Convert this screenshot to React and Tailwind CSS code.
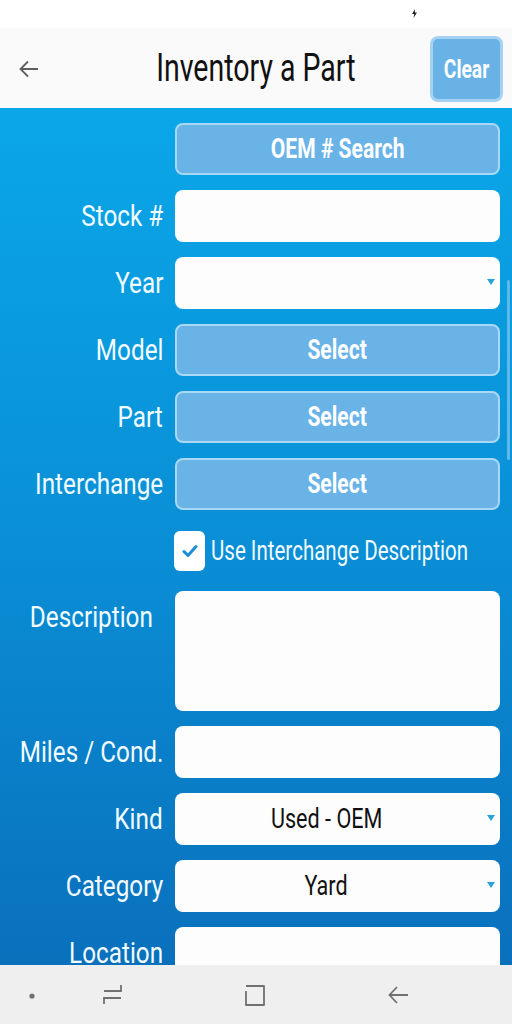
import React from "react";

const font = { fontFamily: "Roboto, 'Noto Sans', sans-serif" };

function Label({ children }) {
  return (
    <div className="w-[175px] shrink-0 pr-[12px] flex justify-end items-center">
      <span className="inline-block origin-right scale-x-[0.81] text-[30px] leading-none text-[#f2fbff] whitespace-nowrap">
        {children}
      </span>
    </div>
  );
}

function SelectBtn({ text }) {
  return (
    <div className="w-[325px] shrink-0 h-[52px] rounded-[8px] border-2 border-[#a9d8f6] bg-[#69b3e7] flex items-center justify-center">
      <span className="inline-block scale-x-[0.78] text-[27px] font-bold leading-none text-white whitespace-nowrap">{text}</span>
    </div>
  );
}

function Input({ h = "h-[52px]" }) {
  return <div className={`w-[325px] shrink-0 ${h} rounded-[8px] bg-[#fdfdfd]`} />;
}

function Dropdown({ value }) {
  return (
    <div className="w-[325px] shrink-0 h-[52px] rounded-[8px] bg-[#fdfdfd] flex items-center relative">
      <div className="flex-1 flex justify-center pr-[22px]">
        <span className="inline-block scale-x-[0.8] text-[27px] leading-none text-[#111] whitespace-nowrap">{value}</span>
      </div>
      <svg className="absolute right-[5px] top-[22px]" width="8" height="6" viewBox="0 0 8 6">
        <path d="M0 0 H8 L4 6 Z" fill="#2aa3d9" />
      </svg>
    </div>
  );
}

function Row({ label, children }) {
  return (
    <div className="flex">
      <Label>{label}</Label>
      {children}
    </div>
  );
}

export default function App() {
  return (
    <div className="w-[512px] h-[1024px] flex flex-col overflow-hidden bg-white" style={font}>
      {/* status bar */}
      <div className="h-[28px] bg-white relative shrink-0">
        <svg className="absolute left-[412px] top-[9px]" width="5" height="9" viewBox="0 0 5 9">
          <path d="M3 0 L0 5 H2.2 L1.5 9 L5 3.5 H2.8 Z" fill="#222" />
        </svg>
      </div>
      {/* header */}
      <div className="h-[80px] bg-[#fafafa] shrink-0 flex items-center relative">
        <svg className="absolute left-[19px] top-[32px]" width="20" height="18" viewBox="0 0 20 18" fill="none" stroke="#5f5f5f" strokeWidth="1.8">
          <path d="M19 9 H2 M9 1.5 L1.5 9 L9 16.5" />
        </svg>
        <div className="flex-1 flex justify-center">
          <span className="inline-block scale-x-[0.75] text-[38px] leading-none text-[#111] whitespace-nowrap">Inventory a Part</span>
        </div>
        <div className="absolute left-[430px] top-[8px] w-[73px] h-[66px] rounded-[8px] border-[3px] border-[#a6d2f1] bg-[#68b2e6] flex items-center justify-center">
          <span className="inline-block scale-x-[0.77] text-[25px] font-bold leading-none text-white">Clear</span>
        </div>
      </div>
      {/* main */}
      <div className="flex-1 overflow-hidden relative bg-gradient-to-b from-[#0aa7e8] via-[#0a8fd6] to-[#0a70bc]">
        <div className="absolute right-[2px] top-[172px] w-[3px] h-[180px] rounded-full bg-[#5fb8ea]" />
        <div className="flex flex-col gap-[15px] pt-[15px]">
          <div className="flex">
            <div className="w-[175px] shrink-0" />
            <SelectBtn text="OEM # Search" />
          </div>
          <Row label="Stock #"><Input /></Row>
          <Row label="Year"><Dropdown value="" /></Row>
          <Row label="Model"><SelectBtn text="Select" /></Row>
          <Row label="Part"><SelectBtn text="Select" /></Row>
          <Row label="Interchange"><SelectBtn text="Select" /></Row>
          <div className="flex items-center mt-[6px] mb-[5px]">
            <div className="w-[174px] shrink-0" />
            <div className="w-[31px] h-[40px] shrink-0 rounded-[6px] bg-white flex items-center justify-center">
              <svg width="16" height="14" viewBox="0 0 16 14" fill="none" stroke="#1b8fd5" strokeWidth="3" strokeLinecap="round" strokeLinejoin="round">
                <path d="M2 7.5 L6 11.5 L14 2.5" />
              </svg>
            </div>
            <span className="ml-[6px] inline-block origin-left scale-x-[0.76] text-[27px] leading-none text-[#f2fbff] whitespace-nowrap">Use Interchange Description</span>
          </div>
          <div className="flex">
            <div className="w-[175px] shrink-0 flex justify-end pr-[22px] pt-[11px]">
              <span className="inline-block origin-right scale-x-[0.81] text-[30px] leading-none text-[#f2fbff] whitespace-nowrap">Description</span>
            </div>
            <Input h="h-[120px]" />
          </div>
          <Row label="Miles / Cond."><Input /></Row>
          <Row label="Kind"><Dropdown value="Used - OEM" /></Row>
          <Row label="Category"><Dropdown value="Yard" /></Row>
          <Row label="Location"><Input /></Row>
        </div>
      </div>
      {/* nav bar */}
      <div className="h-[59px] shrink-0 bg-[#efefef] relative">
        <svg className="absolute left-0 top-0" width="512" height="59" viewBox="0 0 512 59" fill="none" stroke="#707070" strokeWidth="1.8">
          <circle cx="32" cy="31" r="2.6" fill="#707070" stroke="none" />
          <path d="M104 26 H121 V20 M121 33 H104 V39" />
          <path d="M246 21 H264 V40 H246 V26" strokeLinejoin="round" />
          <path d="M408 30 H390 M397 22 L389.5 30 L397 38" />
        </svg>
      </div>
    </div>
  );
}
